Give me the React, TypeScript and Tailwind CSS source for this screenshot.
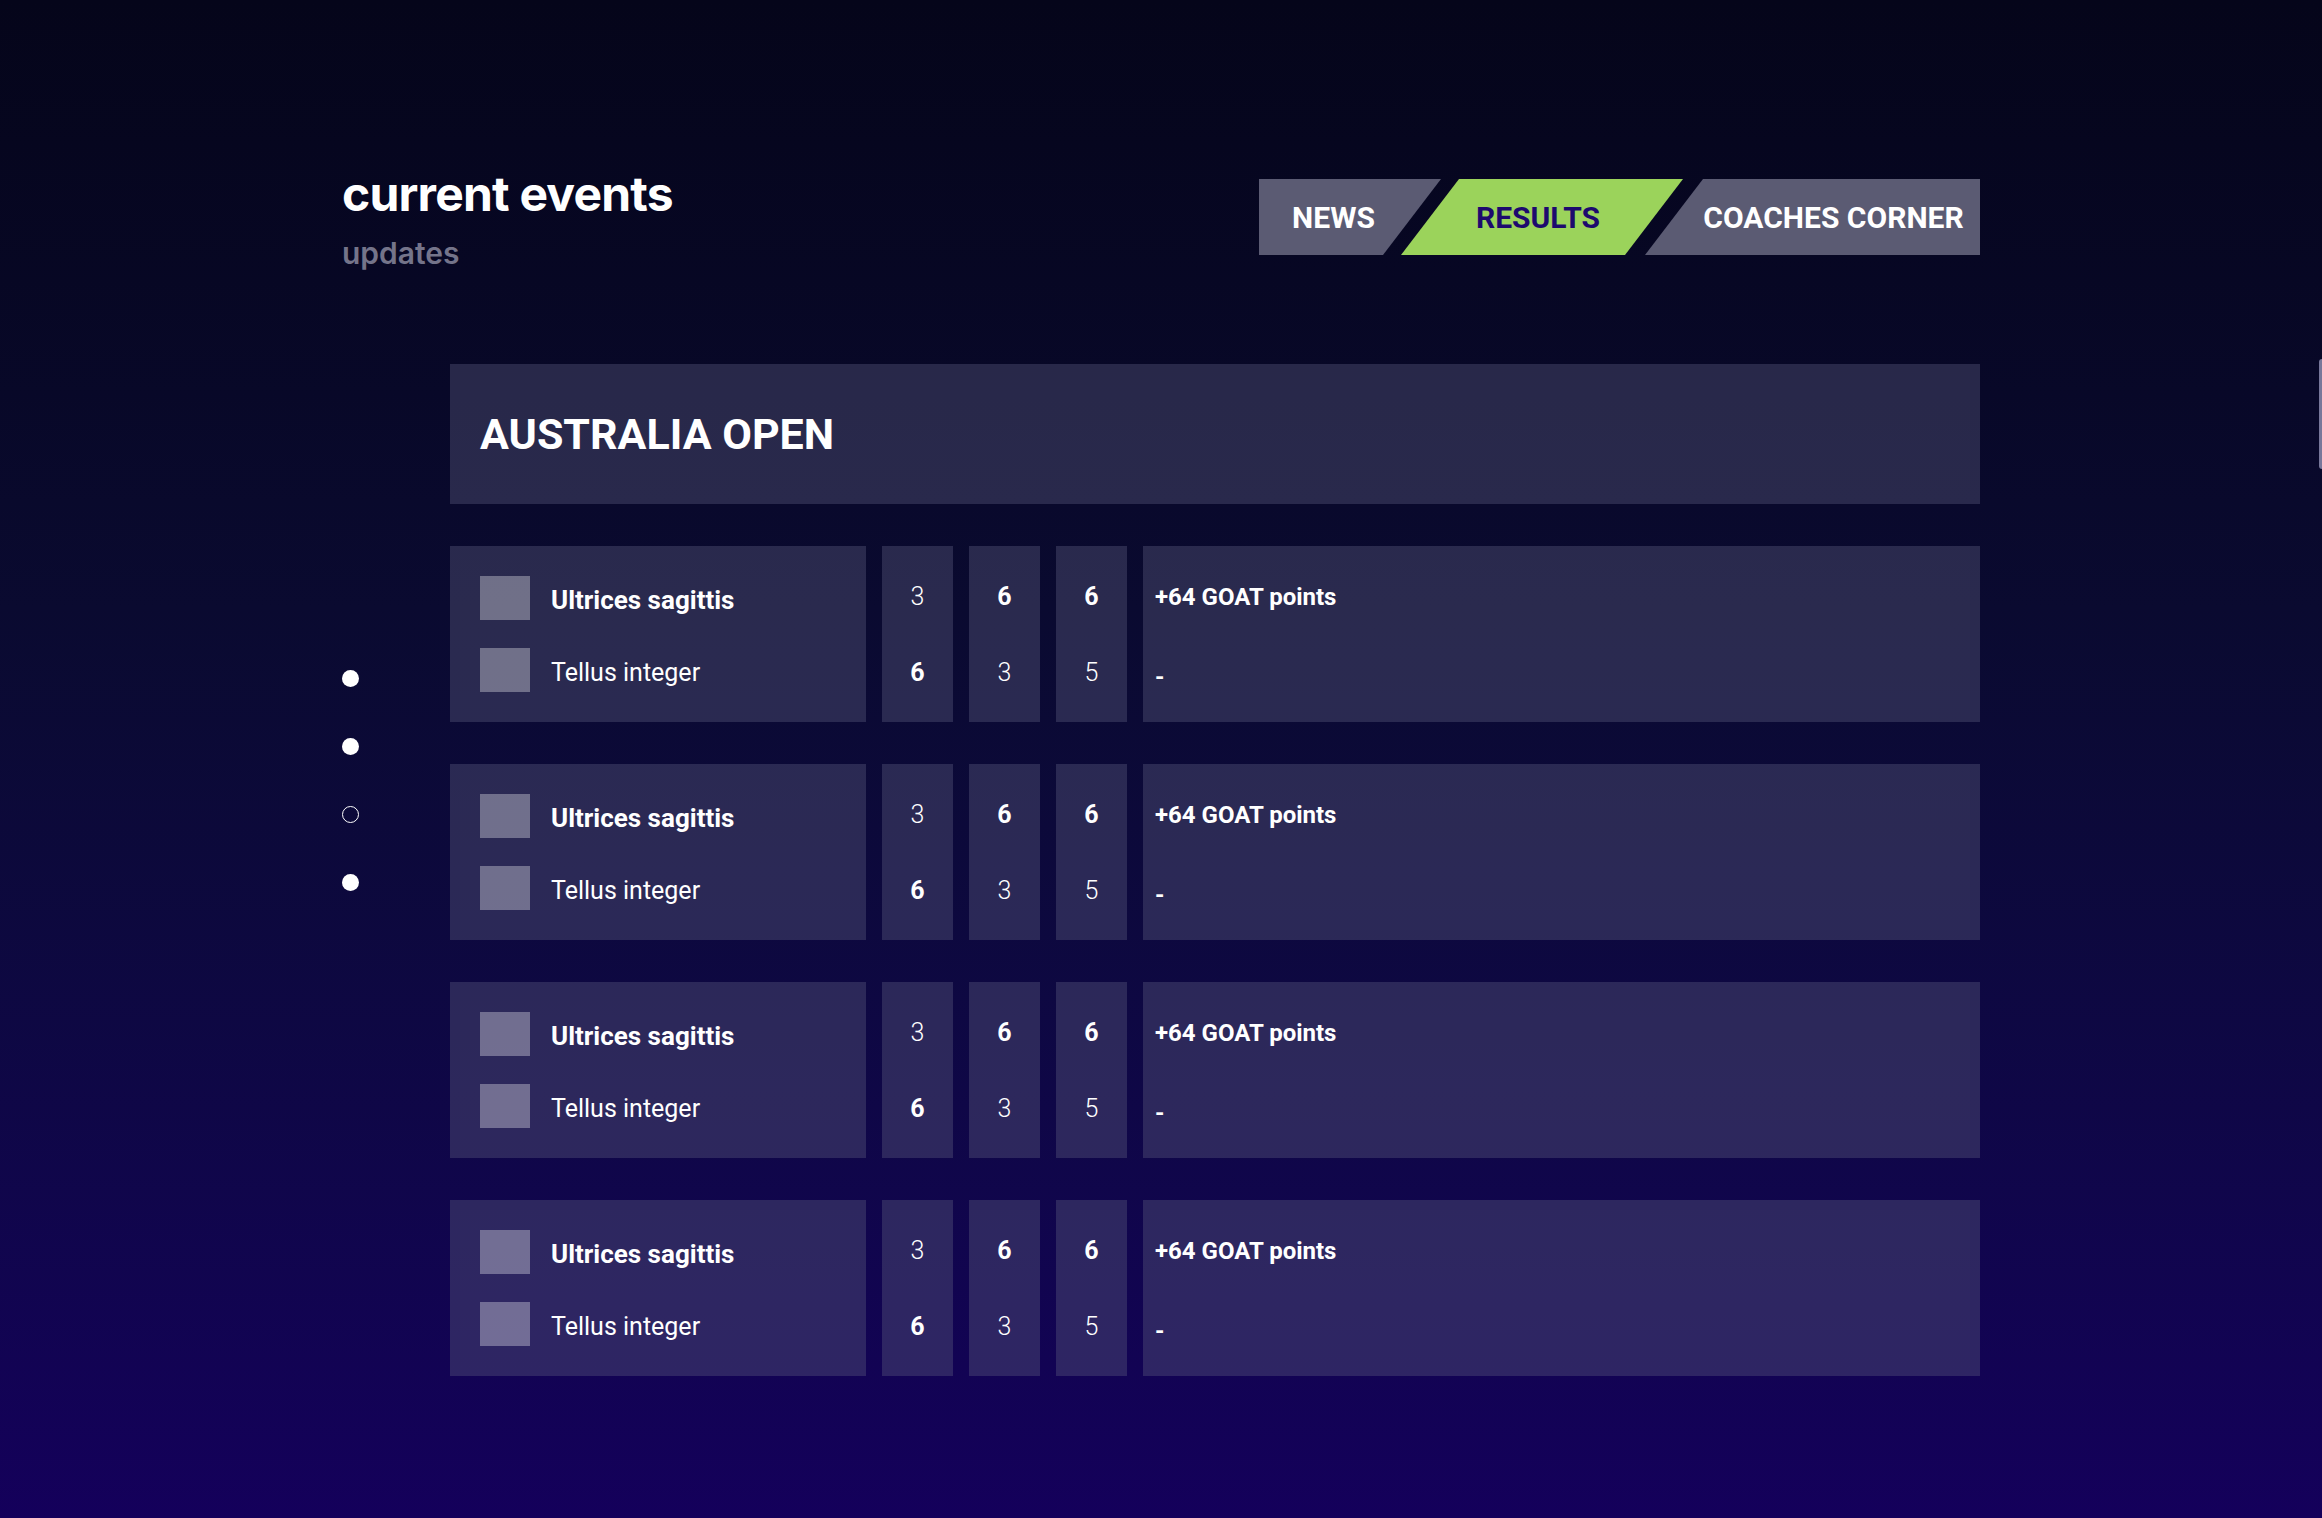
import React from 'react';

interface MatchRow {
  winner: string;
  loser: string;
  sets: [number, number][];
  points: string;
}

const rows: MatchRow[] = Array.from({ length: 4 }, () => ({
  winner: 'Ultrices sagittis',
  loser: 'Tellus integer',
  sets: [
    [3, 6],
    [6, 3],
    [6, 5],
  ],
  points: '+64 GOAT points',
}));

function Tabs() {
  return (
    <div className="mt-[9px] flex h-[76px] font-['Roboto',sans-serif] text-[30px] font-bold">
      <div className="flex w-[182px] items-center justify-center bg-[#5b5b73] pr-[33px] text-white [clip-path:polygon(0_0,100%_0,calc(100%-58px)_100%,0_100%)]">
        NEWS
      </div>
      <div className="-ml-[40px] flex w-[282px] items-center justify-center bg-[#9bd35b] pr-[8px] text-[#1d0a6e] [clip-path:polygon(58px_0,100%_0,calc(100%-58px)_100%,0_100%)]">
        RESULTS
      </div>
      <div className="-ml-[38px] flex w-[335px] items-center justify-center bg-[#5b5b73] pl-[42px] text-white [clip-path:polygon(58px_0,100%_0,100%_100%,0_100%)]">
        COACHES CORNER
      </div>
    </div>
  );
}

function ResultRow({ row }: { row: MatchRow }) {
  return (
    <div className="flex h-[176px] gap-4">
      {/* Players */}
      <div className="flex w-[416px] flex-col gap-[28px] bg-[#5a5a7d]/40 pl-[30px] pt-[30px]">
        <div className="flex h-[44px] items-center gap-[21px]">
          <div className="h-[44px] w-[50px] bg-white/[0.33]" />
          <span className="pt-[5px] text-[26px] font-bold">{row.winner}</span>
        </div>
        <div className="flex h-[44px] items-center gap-[21px]">
          <div className="h-[44px] w-[50px] bg-white/[0.33]" />
          <span className="pt-[5px] text-[25px] font-normal">{row.loser}</span>
        </div>
      </div>

      {/* Sets */}
      {row.sets.map(([a, b], i) => (
        <div key={i} className="flex w-[71px] flex-col items-center gap-[50px] bg-[#5a5a7d]/40 pt-[38px] text-[25px] leading-[26px]">
          <span className={a > b ? 'font-bold' : 'font-light'}>{a}</span>
          <span className={b > a ? 'font-bold' : 'font-light'}>{b}</span>
        </div>
      ))}

      {/* Points */}
      <div className="flex flex-1 flex-col gap-[54px] bg-[#5a5a7d]/40 pl-[12px] pt-[38px] text-[24px] font-bold leading-[26px]">
        <span>{row.points}</span>
        <span>-</span>
      </div>
    </div>
  );
}

export default function App() {
  return (
    <div className="relative min-h-screen w-full bg-gradient-to-b from-[#05051a] via-[#0a0a30] via-40% to-[#14005b] text-white font-['Roboto',sans-serif]">
      <div className="ml-[342px] w-[1638px] pt-[170px]">
        {/* Header */}
        <div className="flex items-start justify-between">
          <div className="font-['Inter',sans-serif]">
            <h1 className="text-[48px] font-bold leading-none tracking-[-0.8px]">current events</h1>
            <p className="mt-[20px] text-[30px] font-semibold leading-none text-[#74748a]">updates</p>
          </div>
          <Tabs />
        </div>

        {/* Main */}
        <div className="mt-[96px] flex">
          <div className="flex w-[108px] flex-col gap-[51px] pt-[306px]">
            <span className="h-[17px] w-[17px] rounded-full bg-white" />
            <span className="h-[17px] w-[17px] rounded-full bg-white" />
            <span className="h-[17px] w-[17px] rounded-full border-[1.5px] border-white" />
            <span className="h-[17px] w-[17px] rounded-full bg-white" />
          </div>

          <div className="flex flex-1 flex-col gap-[42px]">
            <div className="flex h-[140px] items-center bg-[#5a5a7d]/40 pl-[30px]">
              <h2 className="text-[43px] font-bold leading-none">AUSTRALIA OPEN</h2>
            </div>
            {rows.map((row, i) => (
              <ResultRow key={i} row={row} />
            ))}
          </div>
        </div>
      </div>

      {/* scrollbar thumb */}
      <div className="absolute right-0 top-[359px] h-[110px] w-[3px] rounded-l-full bg-[#77779a]" />
    </div>
  );
}
